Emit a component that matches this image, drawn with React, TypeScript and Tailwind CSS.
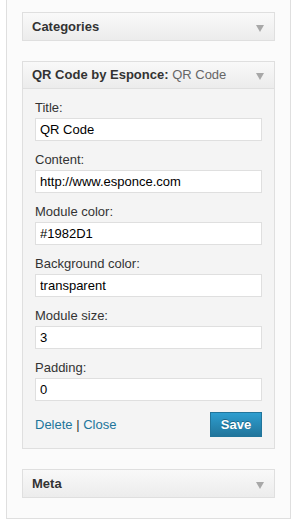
import React from 'react';

const Arrow = () => (
  <svg width="8" height="7" viewBox="0 0 8 7" className="mt-[3px]">
    <path d="M0 0 L8 0 L4 7 Z" fill="#a8a8a8" />
  </svg>
);

const WidgetHeader: React.FC<{ children: React.ReactNode; open?: boolean }> = ({ children, open }) => (
  <div
    className={`flex h-[27px] items-center justify-between bg-gradient-to-b from-[#f9f9f9] to-[#ececec] pl-[9px] pr-[10px] text-[13px] font-bold text-[#333] ${
      open ? 'border-b border-[#dfdfdf]' : ''
    }`}
  >
    <span>{children}</span>
    <Arrow />
  </div>
);

const fields = [
  { label: 'Title:', value: 'QR Code' },
  { label: 'Content:', value: 'http://www.esponce.com' },
  { label: 'Module color:', value: '#1982D1' },
  { label: 'Background color:', value: 'transparent' },
  { label: 'Module size:', value: '3' },
  { label: 'Padding:', value: '0' },
];

export default function App() {
  return (
    <div className="min-h-screen bg-white" style={{ fontFamily: '"Liberation Sans", Arial, sans-serif' }}>
      <div className="ml-[6px] w-[285px] border-x border-b border-[#dfdfdf] bg-[#fbfbfb] px-[15px] pb-[20px] pt-[12px]">
        <div className="flex flex-col gap-[20px]">
          {/* Categories */}
          <div className="border border-[#dfdfdf]">
            <WidgetHeader>Categories</WidgetHeader>
          </div>

          {/* QR Code widget */}
          <div className="border border-[#dfdfdf]">
            <WidgetHeader open>
              QR Code by Esponce: <span className="font-normal text-[#666]">QR Code</span>
            </WidgetHeader>
            <div className="bg-[#f4f4f4] px-[12px] pb-[11px] pt-[11px]">
              {fields.map((f) => (
                <div key={f.label} className="mb-[11px]">
                  <label className="block h-[16px] text-[13px] leading-[16px] text-[#333]">{f.label}</label>
                  <input
                    readOnly
                    value={f.value}
                    className="mt-[2px] block h-[23px] w-full border border-[#dfdfdf] bg-white px-[4px] text-[13px] text-black outline-none"
                  />
                </div>
              ))}
              <div className="mt-[4px] flex items-center justify-between">
                <div className="text-[13px] text-[#21759b]">
                  <span>Delete</span>
                  <span className="text-[#333]"> | </span>
                  <span>Close</span>
                </div>
                <button className="h-[25px] w-[52px] border border-[#21759b] bg-gradient-to-b from-[#2e9ed0] to-[#21759b] text-[13px] font-bold text-white [text-shadow:0_-1px_0_rgba(0,0,0,0.3)]">
                  Save
                </button>
              </div>
            </div>
          </div>

          {/* Meta */}
          <div className="border border-[#dfdfdf]">
            <WidgetHeader>Meta</WidgetHeader>
          </div>
        </div>
      </div>
    </div>
  );
}
